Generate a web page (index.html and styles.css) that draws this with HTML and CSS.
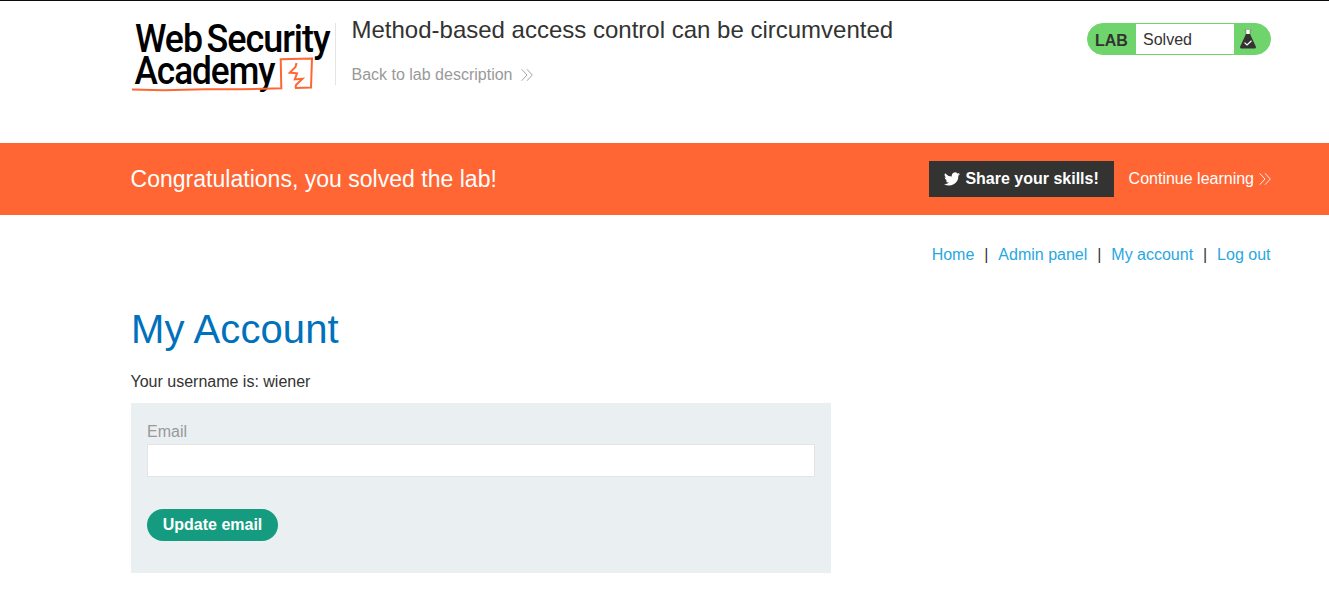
FILE: index.html
```html
<!DOCTYPE html>
<html lang="en">
<head>
<meta charset="utf-8">
<title>Method-based access control can be circumvented</title>
<link rel="stylesheet" href="styles.css">
</head>
<body>
<header class="lab-header">
  <svg class="logo" width="205" height="80" viewBox="130 18 205 80" role="img" aria-label="Web Security Academy">
    <g class="logo-text">
      <text x="135" y="51.8" textLength="67" lengthAdjust="spacingAndGlyphs">Web</text>
      <text x="206.5" y="51.8" textLength="123" lengthAdjust="spacingAndGlyphs">Security</text>
      <text x="134.5" y="84.2" textLength="140" lengthAdjust="spacingAndGlyphs">Academy</text>
    </g>
    <g fill="none" stroke="#ff6633" stroke-width="2">
      <path d="M132 89.6 L164 90.3 L205 89.3 L240 89.3 L281.3 88.3 L280.7 59.3 L312 58.6 L311 87.6 L295 88"/>
      <path d="M296.5 63 L295.5 67 L289.8 72.6 L297 73.3 L294.8 79.4 L302.5 78.8 L296 85 L295.5 88"/>
    </g>
  </svg>
  <div class="title-box">
    <h2>Method-based access control can be circumvented</h2>
    <a class="back" href="#">Back to lab description
      <svg width="12" height="12" viewBox="0 0 12 12"><path d="M.7 .3 6 6 .7 11.7M6 .3 11.3 6 6 11.7"/></svg>
    </a>
  </div>
  <div class="status">
    <span class="status-lab">LAB</span>
    <span class="status-text">Solved</span>
    <svg class="flask" width="16" height="20" viewBox="0 0 16 20">
      <path d="M5 .3h6v1.2h-1V7H6V1.5H5z" fill="#fff" stroke="#5e705c" stroke-width=".6"/>
      <path d="M6 5h4L15.8 17.6q.6 2-1.3 2h-13q-1.9 0-1.3-2z" fill="#333332"/>
      <path d="M4.5 13.6 7 16l4.5-4.3" fill="none" stroke="#fff" stroke-width="1.2"/>
    </svg>
  </div>
</header>
<section class="banner">
  <h4>Congratulations, you solved the lab!</h4>
  <a class="share" href="#">
    <svg width="16" height="14" viewBox="0 2 24 20"><path fill="#fff" d="M24 4.6a10 10 0 0 1-2.8.8 5 5 0 0 0 2.1-2.8 10 10 0 0 1-3.1 1.2 4.9 4.9 0 0 0-8.4 4.5A14 14 0 0 1 1.7 3.2a5 5 0 0 0 1.5 6.6 5 5 0 0 1-2.2-.6 5 5 0 0 0 3.9 4.9 5 5 0 0 1-2.2.1 5 5 0 0 0 4.6 3.4A10 10 0 0 1 0 19.5 14 14 0 0 0 21.5 7.1 10 10 0 0 0 24 4.6z"/></svg>
    <span>Share your skills!</span>
  </a>
  <a class="continue" href="#">Continue learning
    <svg width="12" height="12" viewBox="0 0 12 12"><path d="M.7 .3 6 6 .7 11.7M6 .3 11.3 6 6 11.7"/></svg>
  </a>
</section>
<main class="content">
  <nav class="nav">
    <a href="#">Home</a><span>|</span><a href="#">Admin panel</a><span>|</span><a href="#">My account</a><span>|</span><a href="#">Log out</a>
  </nav>
  <h1>My Account</h1>
  <p>Your username is: wiener</p>
  <form class="email-form">
    <label for="email">Email</label>
    <input id="email" type="email">
    <button type="button">Update email</button>
  </form>
</main>
</body>
</html>
```
FILE: styles.css
```css
* { box-sizing: border-box; }
body {
  margin: 0;
  min-height: 599px;
  border-top: 1px solid #0c0c0c;
  background: #fff;
  color: #333332;
  font: 16px/20px "Liberation Sans", Arial, sans-serif;
}
h1, h2, h4, p { margin: 0; font-weight: 400; }
a { text-decoration: none; }
.lab-header {
  display: flex;
  align-items: flex-start;
  height: 142px;
  padding: 17px 58px 0 130px;
}
.logo { flex: none; overflow: visible; }
.logo-text {
  font-family: Roboto, sans-serif;
  font-size: 38px;
  font-weight: 500;
  letter-spacing: -1.1px;
  fill: #000;
}
.title-box {
  height: 62px;
  margin-top: 5px;
  padding-left: 15.5px;
  border-left: 1px solid #e4e4e4;
}
.title-box h2 {
  margin-top: -7px;
  font-size: 24px;
  line-height: 28px;
  white-space: nowrap;
}
.back {
  display: flex;
  align-items: center;
  gap: 9px;
  margin-top: 21px;
  color: #999;
}
.back svg, .continue svg {
  margin-bottom: 1px;
  fill: none;
  stroke: currentColor;
  stroke-width: .9;
}
.status {
  display: flex;
  width: 184px;
  height: 32px;
  margin: 5px 0 0 auto;
  border: 1px solid #70d46d;
  border-radius: 16px;
  background: #70d46d;
  line-height: 32px;
}
.status-lab { width: 48px; padding-left: 7px; font-weight: 700; line-height: 33px; }
.status-text { width: 98px; padding-left: 7px; background: #fff; }
.flask { margin: 5px 0 0 6px; }
.banner {
  display: flex;
  align-items: center;
  height: 72px;
  padding: 0 58px 0 130.5px;
  background: #ff6633;
  color: #fff;
}
.banner h4 { flex: 1; font-size: 23px; letter-spacing: .02px; }
.share {
  display: flex;
  align-items: center;
  justify-content: center;
  gap: 5px;
  width: 185px;
  height: 36px;
  padding-left: 1px;
  background: #333332;
  color: #fff;
  font-weight: 700;
}
.continue {
  display: flex;
  align-items: center;
  gap: 5px;
  margin-left: 15px;
  color: #fff;
}
.content { padding: 30px 58.5px 0 131px; }
.nav { display: flex; justify-content: flex-end; }
.nav a { color: #29a7df; }
.nav span { width: 24px; text-align: center; }
h1 { margin-top: 39px; color: #0071bc; font-size: 40px; line-height: 50px; letter-spacing: .1px; }
p { margin: 18px 0 0 -.5px; }
.email-form {
  width: 700px;
  height: 170px;
  margin-top: 11px;
  padding: 19px 16px;
  background: #eaeff2;
}
.email-form label { display: block; color: #999; }
.email-form input {
  display: block;
  width: 668px;
  height: 33px;
  margin-top: 2px;
  border: 1px solid #e4e4e4;
  background: #fff;
}
.email-form button {
  width: 131px;
  height: 32px;
  margin-top: 32px;
  padding: 0;
  border: 0;
  border-radius: 16px;
  background: #159c80;
  color: #fff;
  font: 700 16px/30px "Liberation Sans", Arial, sans-serif;
}
```
